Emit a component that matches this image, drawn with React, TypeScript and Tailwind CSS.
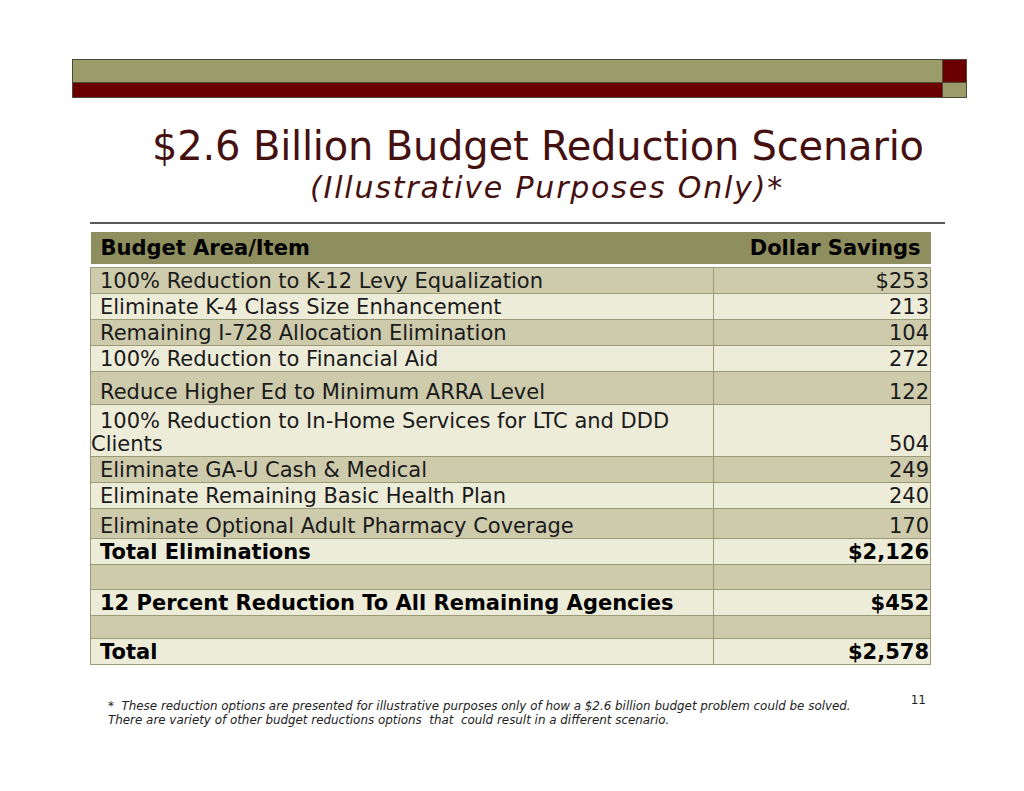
import React from "react";

type Row = {
  label: React.ReactNode;
  value: string;
  dark: boolean;
  bold?: boolean;
  h: string;
};

const rows: Row[] = [
  { label: "100% Reduction to K-12 Levy Equalization", value: "$253", dark: true, h: "h-[26px]" },
  { label: "Eliminate K-4 Class Size Enhancement", value: "213", dark: false, h: "h-[26px]" },
  { label: "Remaining I-728 Allocation Elimination", value: "104", dark: true, h: "h-[26px]" },
  { label: "100% Reduction to Financial Aid", value: "272", dark: false, h: "h-[26px]" },
  { label: "Reduce Higher Ed to Minimum ARRA Level", value: "122", dark: true, h: "h-[33px]" },
  {
    label: (
      <>
        <span className="pl-[9px]">100% Reduction to In-Home Services for LTC and DDD</span>
        <br />
        Clients
      </>
    ),
    value: "504",
    dark: false,
    h: "h-[52px]",
  },
  { label: "Eliminate GA-U Cash & Medical", value: "249", dark: true, h: "h-[26px]" },
  { label: "Eliminate Remaining Basic Health Plan", value: "240", dark: false, h: "h-[26px]" },
  { label: "Eliminate Optional Adult Pharmacy Coverage", value: "170", dark: true, h: "h-[30px]" },
  { label: "Total Eliminations", value: "$2,126", dark: false, bold: true, h: "h-[26px]" },
  { label: "", value: "", dark: true, h: "h-[25px]" },
  { label: "12 Percent Reduction To All Remaining Agencies", value: "$452", dark: false, bold: true, h: "h-[26px]" },
  { label: "", value: "", dark: true, h: "h-[23px]" },
  { label: "Total", value: "$2,578", dark: false, bold: true, h: "h-[26px]" },
];

function TopBars() {
  return (
    <div className="ml-[72px] mt-[59px] flex w-[895px] flex-col">
      <div className="flex h-[24px]">
        <div className="w-[871px] border border-[#4a4a3a] bg-[#9c9b6a]" />
        <div className="flex-1 border border-l-0 border-[#4a4a3a] bg-[#6a0000]" />
      </div>
      <div className="flex h-[15px]">
        <div className="w-[871px] border border-t-0 border-[#4a4a3a] bg-[#6a0000]" />
        <div className="flex-1 border border-l-0 border-t-0 border-[#4a4a3a] bg-[#9c9b6a]" />
      </div>
    </div>
  );
}

export default function App() {
  return (
    <div
      className="relative h-[791px] w-[1024px] overflow-hidden bg-white"
      style={{ fontFamily: '"DejaVu Sans", Verdana, sans-serif' }}
    >
      <TopBars />

      {/* Title */}
      <div className="ml-[90px] mt-[26px] w-[896px] text-center text-[#451010]">
        <div className="text-[40px] leading-[44px] tracking-[-0.2px]">$2.6 Billion Budget Reduction Scenario</div>
        <div className="mt-[3px] pl-[18px] text-[30px] italic leading-[34px] tracking-[1.8px]">(Illustrative Purposes Only)*</div>
      </div>

      <div className="ml-[90px] mt-[17px] h-[2px] w-[855px] bg-[#5a5a5a]" />

      {/* Table */}
      <table className="ml-[90px] mt-[8px] w-[841px] border-collapse text-[21px] leading-[23px] text-[#1a1a1a]">
        <thead>
          <tr className="h-[32px] bg-[#8f8e5e]">
            <th className="pl-[10px] text-left font-bold text-black">Budget Area/Item</th>
            <th className="pr-[10px] text-right font-bold text-black">Dollar Savings</th>
          </tr>
          <tr className="h-[3px] bg-white">
            <td colSpan={2} />
          </tr>
        </thead>
        <tbody>
          {rows.map((r, i) => (
            <tr
              key={i}
              className={`${r.h} ${r.dark ? "bg-[#cdcbac]" : "bg-[#edecd9]"} ${r.bold ? "font-bold text-black" : ""}`}
            >
              <td
                className={`w-[623px] border border-[#9c9b78] align-bottom ${
                  i === 5 ? "pl-0" : "pl-[9px]"
                } pb-0`}
              >
                {r.label}
              </td>
              <td className="border border-[#9c9b78] pr-[1px] pb-0 text-right align-bottom">{r.value}</td>
            </tr>
          ))}
        </tbody>
      </table>

      {/* Footnote */}
      <div className="ml-[108px] mt-[34px] flex w-[818px] items-start justify-between text-[#222]">
        <div className="text-[11.9px] italic leading-[14px]">
          <div>*&nbsp; These reduction options are presented for illustrative purposes only of how a $2.6 billion budget problem could be solved.</div>
          <div>There are variety of other budget reductions options&nbsp; that&nbsp; could result in a different scenario.</div>
        </div>
        <div className="-mt-[8px] text-[12px]">11</div>
      </div>
    </div>
  );
}
